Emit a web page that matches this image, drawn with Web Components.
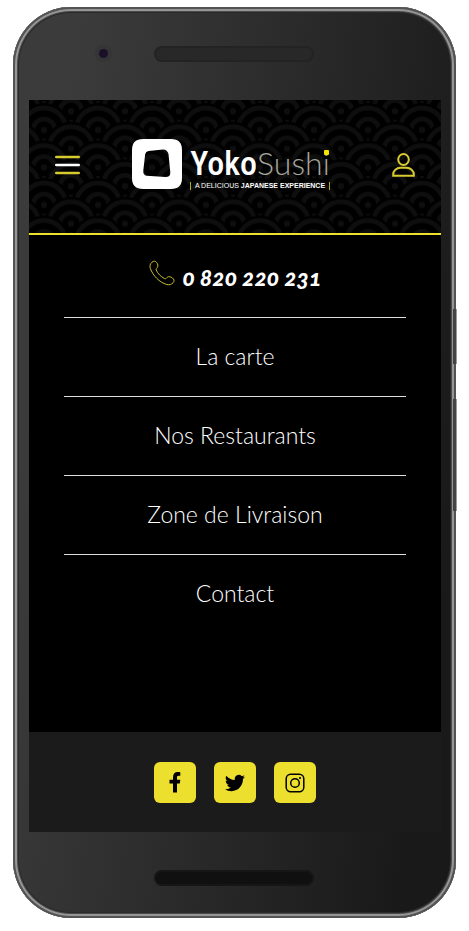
<!DOCTYPE html>
<html lang="fr">
<head>
<meta charset="utf-8">
<meta name="viewport" content="width=device-width, initial-scale=1">
<title>YokoSushi</title>
<style>
  html { background: #fff; }
  body {
    margin: 0;
    min-height: 100vh;
    box-sizing: border-box;
    padding: 7px 13px 13px;
    display: flex;
    font-family: Lato, "Open Sans", sans-serif;
    --accent: #eddf2e;
  }
</style>
</head>
<body>
<phone-frame>
  <site-header></site-header>
  <site-menu>
    <menu-entry href="tel:0820220231" strong>
      <svg slot="icon" width="26" height="26" viewBox="0 0 26 26" fill="none" stroke="#c9bd2c" stroke-width="1" aria-hidden="true">
        <path d="M3 2.2C4.600 .7 6.700 1 7.600 2.500C8.800 4.300 9.300 5.800 8.500 7.200C7.800 8.400 6.700 8.700 7.200 10C8.700 13.500 12 16.800 15.500 18.600C17 19.300 17.300 17.800 18.500 17.100C20 16.200 21.700 16.800 23.400 18C25.300 19.400 25.500 21.200 24.200 22.600C22.500 24.500 20.300 25.200 17.800 24.500C10.500 22.400 3.800 15.600 1.300 8.300C.5 5.900 1.100 3.900 3 2.200Z"/>
      </svg>
      0 820 220 231
    </menu-entry>
    <menu-entry href="#carte">La carte</menu-entry>
    <menu-entry href="#restaurants">Nos Restaurants</menu-entry>
    <menu-entry href="#livraison">Zone de Livraison</menu-entry>
    <menu-entry href="#contact" last>Contact</menu-entry>
  </site-menu>
  <site-footer>
    <social-link href="#facebook" label="Facebook">
      <svg width="24" height="24" viewBox="0 0 24 24" aria-hidden="true"><path d="M10 21.500V12.400H6.500V8.800H10V6.300C10 2.800 11.800 1 14.800 1C16.200 1 17.300 1.200 17.300 1.200V4.800H15.600C14.300 4.800 14 5.500 14 6.500V8.800H17.300L16.800 12.400H14V21.500Z"/></svg>
    </social-link>
    <social-link href="#twitter" label="Twitter">
      <svg width="20" height="20" viewBox="0 0 24 24" aria-hidden="true"><path d="M23.950 4.570a10 10 0 0 1-2.820.77 4.960 4.960 0 0 0 2.160-2.720c-.95.55-2 .95-3.130 1.180a4.920 4.920 0 0 0-8.380 4.480C7.690 8.100 4.070 6.130 1.640 3.160a4.920 4.920 0 0 0 1.520 6.570 4.900 4.900 0 0 1-2.230-.61v.06a4.920 4.920 0 0 0 3.950 4.830 5 5 0 0 1-2.210.08 4.940 4.940 0 0 0 4.600 3.420A9.870 9.870 0 0 1 0 19.540a13.990 13.990 0 0 0 7.550 2.210c9.050 0 14-7.500 14-13.980 0-.21 0-.42-.02-.63a9.940 9.940 0 0 0 2.460-2.550z"/></svg>
    </social-link>
    <social-link href="#instagram" label="Instagram">
      <svg width="20" height="20" viewBox="0 0 20 20" fill="none" stroke="#000" stroke-width="1.500" aria-hidden="true"><rect x="1.200" y="1.200" width="17.600" height="17.600" rx="4.500"/><circle cx="10" cy="10" r="4.300"/><circle cx="15" cy="5" r="1.100" fill="#000" stroke="none"/></svg>
    </social-link>
  </site-footer>
</phone-frame>

<script>
const define = (name, html, setup) => {
  const template = document.createElement('template');
  template.innerHTML = html;
  customElements.define(name, class extends HTMLElement {
    connectedCallback() {
      if (this.shadowRoot) return;
      this.attachShadow({ mode: 'open' }).append(template.content.cloneNode(true));
      if (setup) setup(this, this.shadowRoot);
    }
  });
};

define('phone-frame', `
<style>
  :host {
    flex: 1; min-width: 0; box-sizing: border-box; position: relative;
    display: grid; grid-template-rows: 93px 1fr 86px;
    padding: 0 15px 0 16px;
    border-radius: 58px;
    background: linear-gradient(98deg, #3b3b3b 12%, #191919 90%);
    box-shadow: inset 0 0 0 2px #535353, inset 0 0 0 4px #969696, inset 0 0 0 5px #4a4a4a, inset 0 0 0 6px #2a2a2a;
  }
  .top, .bottom { display: grid; grid-template-columns: 1fr 160px 1fr; align-items: center; padding-right: 2px; }
  .camera { justify-self: center; width: 9px; height: 9px; margin-right: -24px; border-radius: 50%; background: #1a1029; box-shadow: 0 0 0 4px #353535; }
  .slot { box-sizing: border-box; grid-column: 2; height: 16px; border-radius: 8px; background: #282828; border: 2px solid #232323; }
  .bottom .slot { background: #101010; border-color: #161616; margin-top: 5px; }
  .screen { display: flex; flex-direction: column; min-width: 0; background: #000; }
  .key { position: absolute; right: -1px; width: 4px; background: linear-gradient(90deg, #444 75%, #999 75%); }
  .power { top: 302px; height: 55px; }
  .volume { top: 392px; height: 112px; }
</style>
<div class="top"><span class="camera"></span><span class="slot"></span></div>
<div class="screen"><slot></slot></div>
<div class="bottom"><span class="slot"></span></div>
<span class="key power"></span><span class="key volume"></span>`);

define('wave-pattern', `
<style>
  :host { display: block; }
  svg { display: block; width: 100%; height: 100%; }
</style>
<svg aria-hidden="true">
  <defs>
    <g id="wave">
      <circle r="27" fill="#000"/>
      <circle r="22" fill="none" stroke="#0e0e0e" stroke-width="4.500"/>
      <circle r="11" fill="none" stroke="#0e0e0e" stroke-width="4.500"/>
      <circle r="3" fill="#0e0e0e"/>
    </g>
    <g id="pair"><use href="#wave" x="-12"/><use href="#wave" x="42"/></g>
    <g id="offset-pair"><use href="#wave" x="15"/><use href="#wave" x="69"/></g>
    <pattern id="waves" width="54" height="37.500" patternUnits="userSpaceOnUse">
      <use href="#offset-pair" y="-7.500"/>
      <use href="#pair" y="11.250"/>
      <use href="#offset-pair" y="30"/>
      <use href="#pair" y="48.750"/>
      <use href="#offset-pair" y="67.500"/>
    </pattern>
  </defs>
  <rect width="100%" height="100%" fill="url(#waves)"/>
</svg>`);

define('yoko-logo', `
<style>
  :host { display: block; }
  a { display: flex; align-items: flex-start; gap: 8px; color: #fff; text-decoration: none; }
  svg { display: block; flex: none; }
  .words { display: flex; flex-direction: column; gap: 2px; padding-top: 7px; white-space: nowrap; }
  .name { display: flex; align-items: baseline; }
  .yoko { font: 500 34px/34px "Roboto Condensed", "Liberation Sans Narrow", Roboto, sans-serif; }
  .sushi { position: relative; font: 300 32px/34px Lato, sans-serif; color: #a5a59c; }
  .sushi::after { content: ""; position: absolute; right: 1px; top: 4px; width: 5px; height: 5px; border-radius: 1px; background: #f5e400; }
  .tag { display: flex; justify-content: center; font: 7px/8px "Liberation Sans", sans-serif; border: solid #b3a91f; border-width: 0 1px; }
</style>
<a href="#accueil" aria-label="YokoSushi">
  <svg width="50" height="50" viewBox="0 0 50 50" aria-hidden="true">
    <path fill="#fff" fill-rule="evenodd" d="M11 0H39Q50 0 50 11V39Q50 50 39 50H11Q0 50 0 39V11Q0 0 11 0ZM16.500 12Q13.800 12.500 13.200 15L11.300 31.500Q11 36 14.500 36.800L33.500 38Q38.500 38 38.300 33.500L36.500 15Q35.500 10.500 31 10.400Z"/>
  </svg>
  <span class="words">
    <span class="name"><span class="yoko">Yoko</span><span class="sushi">Sushi</span></span>
    <span class="tag"><span>A DELICIOUS <b>JAPANESE EXPERIENCE</b></span></span>
  </span>
</a>`);

define('site-header', `
<style>
  :host { display: grid; border-bottom: 2px solid var(--accent); }
  wave-pattern, .bar { grid-area: 1 / 1; min-width: 0; }
  wave-pattern { height: 0; min-height: 100%; }
  .bar { position: relative; display: flex; align-items: center; justify-content: space-between; padding: 39px 26px 43px; }
  yoko-logo { margin-right: 10px; }
  button { border: 0; padding: 0; background: none; cursor: pointer; }
  svg { display: block; }
</style>
<wave-pattern></wave-pattern>
<div class="bar">
  <button aria-label="Menu">
    <svg width="25" height="20" viewBox="0 0 25 20" stroke-width="2.600" stroke-linecap="round"><path stroke="#d8cb2f" d="M1.300 2H23.700M1.300 18H23.700"/><path stroke="#fff" d="M1.300 10H23.700"/></svg>
  </button>
  <yoko-logo></yoko-logo>
  <button aria-label="Mon compte">
    <svg width="23" height="24" viewBox="0 0 23 24" fill="none" stroke="#d8cb2f" stroke-width="2"><ellipse cx="11.500" cy="6.500" rx="5.300" ry="5.500"/><path d="M1.200 22.800V21.500C1.200 17.500 4.500 14.800 8.500 14.800H14.500C18.500 14.800 21.800 17.500 21.800 21.500V22.800Z"/></svg>
  </button>
</div>`);

define('site-menu', `
<style>
  :host { flex: 1; display: block; padding: 4px 35px 0; }
  nav { display: flex; flex-direction: column; }
</style>
<nav aria-label="Navigation principale"><slot></slot></nav>`);

define('menu-entry', `
<style>
  :host { display: block; border-bottom: 1px solid #ddd; }
  :host([last]) { border-bottom: 0; }
  a { display: flex; align-items: center; justify-content: center; gap: 8px; padding: 23px 0 25px; color: #fff; text-decoration: none; font-size: 23px; line-height: 30px; font-weight: 300; white-space: nowrap; }
  :host([strong]) a { font-weight: 900; font-style: italic; font-variant-numeric: oldstyle-nums; }
  ::slotted(svg) { display: block; margin-top: -8px; }
</style>
<a><slot name="icon"></slot><span><slot></slot></span></a>`,
(host, root) => { root.querySelector('a').href = host.getAttribute('href'); });

define('site-footer', `
<style>
  :host { display: flex; justify-content: center; gap: 18px; padding: 30px 16px 29px; background: #1b1b1b; }
</style>
<slot></slot>`);

define('social-link', `
<style>
  :host { display: block; }
  a { display: flex; align-items: center; justify-content: center; width: 42px; height: 41px; border-radius: 6px; background: var(--accent); }
  ::slotted(svg) { display: block; }
</style>
<a><slot></slot></a>`,
(host, root) => {
  const link = root.querySelector('a');
  link.href = host.getAttribute('href');
  link.setAttribute('aria-label', host.getAttribute('label'));
});
</script>
</body>
</html>
